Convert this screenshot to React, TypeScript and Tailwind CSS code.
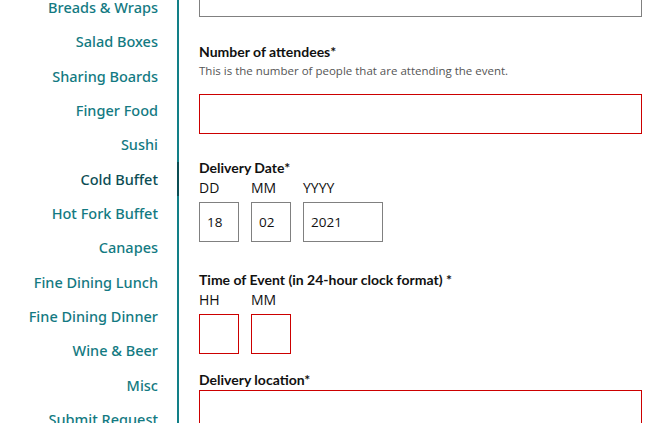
import React from "react";

const items = [
  "Breads & Wraps",
  "Salad Boxes",
  "Sharing Boards",
  "Finger Food",
  "Sushi",
  "Cold Buffet",
  "Hot Fork Buffet",
  "Canapes",
  "Fine Dining Lunch",
  "Fine Dining Dinner",
  "Wine & Beer",
  "Misc",
  "Submit Request",
];

export default function App() {
  return (
    <div className="flex h-[423px] w-[645px] overflow-hidden bg-white" style={{ fontFamily: "'Noto Sans', Lato, sans-serif" }}>
      <nav className="w-[179px] shrink-0 border-r-2 border-[#127f87]">
        <ul className="mt-[-10px]">
          {items.map((it) =>
            it === "Cold Buffet" ? (
              <li key={it} className="relative h-[34.33px] pr-[19px] text-right text-[14.5px] font-medium leading-[34.33px] text-[#0b4d54]">
                {it}
                <span className="absolute right-[-2px] top-0 h-full w-[2px] bg-[#0b4d54]" />
              </li>
            ) : (
              <li key={it} className="h-[34.33px] pr-[19px] text-right text-[14.5px] font-medium leading-[34.33px] text-[#137a82]">
                {it}
              </li>
            )
          )}
        </ul>
      </nav>
      <main className="flex-1 pl-[20px] pr-[3px] text-[#111]" style={{ fontFamily: "'Open Sans', Lato, sans-serif" }}>
        <div className="mt-[-23px] h-10 border border-[#808080]" />
        <div className="mt-[25px] text-[14px] font-bold leading-[20px]" style={{ fontFamily: "Lato, sans-serif" }}>Number of attendees*</div>
        <div className="text-[11.5px] leading-[18px] text-[#555]">This is the number of people that are attending the event.</div>
        <div className="mt-[14px] h-10 border border-[#cc0000]" />

        <div className="mt-[24px] text-[14px] font-bold leading-[20px]" style={{ fontFamily: "Lato, sans-serif" }}>Delivery Date*</div>
        <div className="flex gap-3">
          <div className="w-10">
            <div className="text-[14px] leading-[20px]">DD</div>
            <div className="mt-[4px] flex h-10 w-10 items-center border border-[#808080] pl-[7px] text-[13.5px]">18</div>
          </div>
          <div className="w-10">
            <div className="text-[14px] leading-[20px]">MM</div>
            <div className="mt-[4px] flex h-10 w-10 items-center border border-[#808080] pl-[7px] text-[13.5px]">02</div>
          </div>
          <div className="w-20">
            <div className="text-[14px] leading-[20px]">YYYY</div>
            <div className="mt-[4px] flex h-10 w-20 items-center border border-[#808080] pl-[7px] text-[13.5px]">2021</div>
          </div>
        </div>

        <div className="mt-[28px] text-[14px] font-bold leading-[20px]" style={{ fontFamily: "Lato, sans-serif" }}>Time of Event (in 24-hour clock format) *</div>
        <div className="flex gap-3">
          <div className="w-10">
            <div className="text-[14px] leading-[20px]">HH</div>
            <div className="mt-[4px] h-10 w-10 border border-[#cc0000]" />
          </div>
          <div className="w-10">
            <div className="text-[14px] leading-[20px]">MM</div>
            <div className="mt-[4px] h-10 w-10 border border-[#cc0000]" />
          </div>
        </div>

        <div className="mt-[16px] text-[14px] font-bold leading-[20px]" style={{ fontFamily: "Lato, sans-serif" }}>Delivery location*</div>
        <div className="h-10 border border-[#cc0000]" />
      </main>
    </div>
  );
}
